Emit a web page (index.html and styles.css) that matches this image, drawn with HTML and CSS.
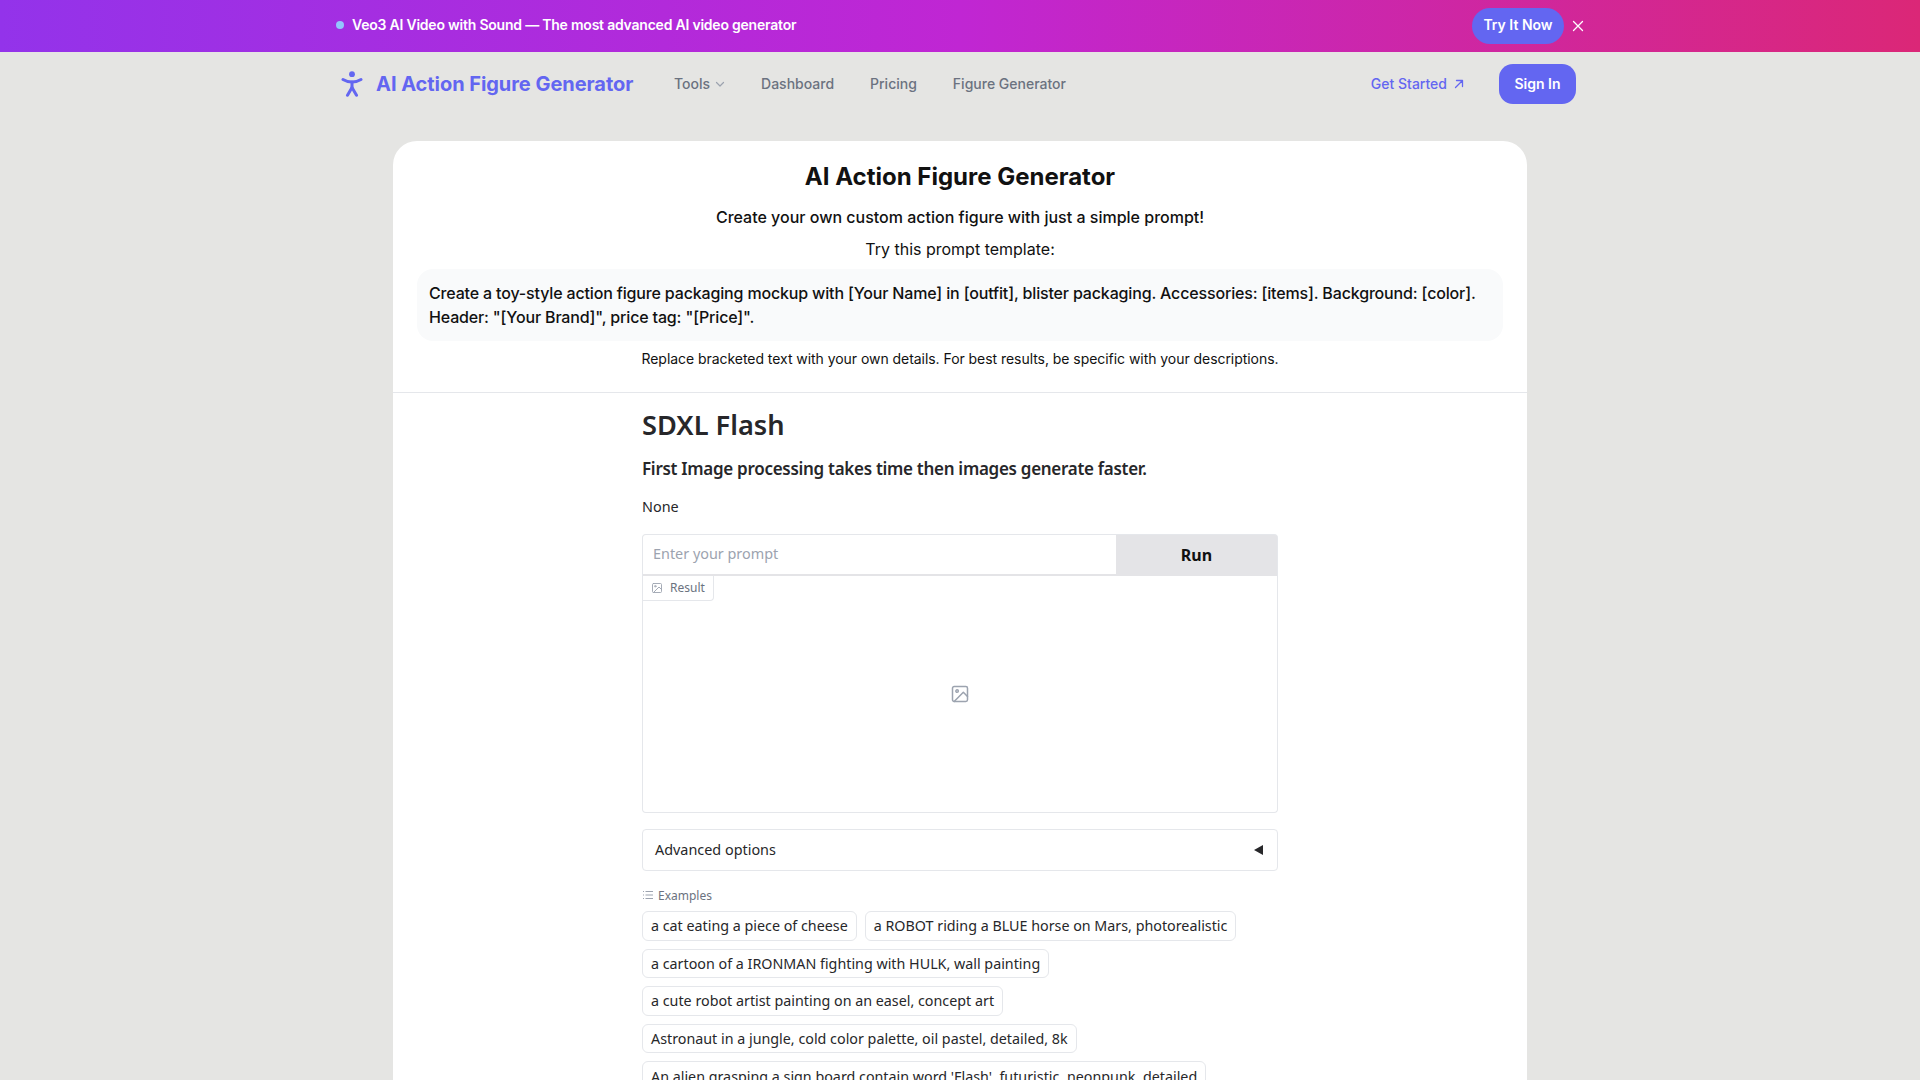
FILE: index.html
```html
<!DOCTYPE html>
<html lang="en">
<head>
<meta charset="utf-8">
<title>AI Action Figure Generator</title>
<link rel="stylesheet" href="styles.css">
</head>
<body>
<div class="banner">
  <div class="banner-inner">
    <div class="banner-msg"><span class="dot"></span><span class="banner-text">Veo3 AI Video with Sound — The most advanced AI video generator</span></div>
    <div class="banner-actions">
      <a class="try-btn">Try It Now</a>
      <svg class="close-icon" viewBox="0 0 24 24" fill="none" stroke="#fff" stroke-width="2.600" stroke-linecap="round"><path d="M3 3l18 18M21 3L3 21"/></svg>
    </div>
  </div>
</div>
<nav class="nav">
  <div class="nav-inner">
    <a class="brand">
      <svg class="brand-icon" viewBox="0 0 22 26" fill="none" stroke="#6366f1" stroke-width="3" stroke-linecap="round" stroke-linejoin="round"><circle cx="11" cy="3.200" r="2.900" fill="#6366f1" stroke="none"/><path d="M2 8.500c2.800 1.700 5.700 2.500 9 2.500s6.200-.8 9-2.500"/><path d="M11 11v5.500"/><path d="M6.500 24.300L11 16.500l4.500 7.800"/></svg>
      <span class="brand-name">AI Action Figure Generator</span>
    </a>
    <div class="nav-links">
      <a class="nav-link tools">Tools <svg class="chev" viewBox="0 0 12 12" fill="none" stroke="#9ca3af" stroke-width="1.200" stroke-linecap="round" stroke-linejoin="round"><path d="M2.500 4.500L6 8l3.500-3.500"/></svg></a>
      <a class="nav-link">Dashboard</a>
      <a class="nav-link">Pricing</a>
      <a class="nav-link">Figure Generator</a>
    </div>
    <div class="nav-right">
      <a class="started">Get Started <svg class="ext" viewBox="0 0 12 12" fill="none" stroke="#6366f1" stroke-width="1.300" stroke-linecap="round" stroke-linejoin="round"><path d="M2.500 9.500l7-7M3.500 2.500h6v6"/></svg></a>
      <a class="signin">Sign In</a>
    </div>
  </div>
</nav>
<main class="main">
  <section class="card">
    <header class="card-head">
      <h1 class="title">AI Action Figure Generator</h1>
      <p class="sub">Create your own custom action figure with just a simple prompt!</p>
      <p class="try">Try this prompt template:</p>
      <div class="template">Create a toy-style action figure packaging mockup with [Your Name] in [outfit], blister packaging. Accessories: [items]. Background: [color]. Header: "[Your Brand]", price tag: "[Price]".</div>
      <p class="hint">Replace bracketed text with your own details. For best results, be specific with your descriptions.</p>
    </header>
    <div class="app">
      <h2 class="app-title">SDXL Flash</h2>
      <h3 class="app-sub">First Image processing takes time then images generate faster.</h3>
      <p class="none">None</p>
      <div class="prompt-row">
        <div class="prompt-input">Enter your prompt</div>
        <button class="run">Run</button>
      </div>
      <div class="result">
        <div class="result-tab">
          <svg class="tab-icon" viewBox="0 0 24 24" fill="none" stroke="#9ca3af" stroke-width="1.800" stroke-linecap="round" stroke-linejoin="round"><rect x="3" y="3" width="18" height="18" rx="2"/><circle cx="8.500" cy="8.500" r="1.500"/><path d="M21 15l-5-5L5 21"/></svg>
          <span>Result</span>
        </div>
        <svg class="empty-icon" viewBox="0 0 24 24" fill="none" stroke="#9ca3af" stroke-width="1.800" stroke-linecap="round" stroke-linejoin="round"><rect x="3" y="3" width="18" height="18" rx="2"/><circle cx="8.500" cy="8.500" r="1.500"/><path d="M21 15l-5-5L5 21"/></svg>
      </div>
      <div class="advanced"><span class="advanced-label">Advanced options</span><span class="caret"></span></div>
      <div class="examples-label">
        <svg class="list-icon" viewBox="0 0 12 12" fill="none" stroke="#9ca3af" stroke-width="1"><path d="M3.500 2.500H11M3.500 6H11M3.500 9.500H11M1 2.500h1M1 6h1M1 9.500h1"/></svg>
        <span>Examples</span>
      </div>
      <div class="chips">
        <span class="chip">a cat eating a piece of cheese</span>
        <span class="chip">a ROBOT riding a BLUE horse on Mars, photorealistic</span>
        <span class="chip">a cartoon of a IRONMAN fighting with HULK, wall painting</span>
        <span class="chip">a cute robot artist painting on an easel, concept art</span>
        <span class="chip">Astronaut in a jungle, cold color palette, oil pastel, detailed, 8k</span>
        <span class="chip">An alien grasping a sign board contain word 'Flash', futuristic, neonpunk, detailed</span>
      </div>
    </div>
  </section>
</main>
</body>
</html>
```
FILE: styles.css
```css
* { box-sizing: border-box; }
html, body { margin: 0; height: 100%; overflow: hidden; }
body { background: #e5e5e3; font-family: Inter, "Liberation Sans", sans-serif; color: #111; }
h1, h2, h3, p { margin: 0; }

.banner { height: 52px; background: linear-gradient(90deg, #9333ea, #c026d3 50%, #db2777); }
.banner-inner { max-width: 1280px; height: 100%; margin: 0 auto; padding: 0 16px; display: flex; align-items: center; justify-content: space-between; }
.banner-msg { display: flex; align-items: center; gap: 8px; color: #fff; font-size: 14px; font-weight: 600; }
.banner-text { padding-bottom: 4px; letter-spacing: -0.22px; }
.dot { width: 8px; height: 8px; border-radius: 50%; background: #93c5fd; margin-bottom: 2px; }
.banner-actions { display: flex; align-items: center; gap: 8px; }
.try-btn { height: 36px; width: 92px; padding-bottom: 3px; border-radius: 18px; background: #6366f1; color: #fff; font-size: 14px; font-weight: 600; display: flex; align-items: center; justify-content: center; }
.close-icon { width: 12px; height: 12px; margin-bottom: 1px; }

.nav-inner { max-width: 1280px; height: 64px; margin: 0 auto; padding: 0 24px 0 20px; display: flex; align-items: center; }
.brand { display: flex; align-items: center; gap: 13px; width: 334px; }
.brand-icon { width: 22px; height: 26px; margin-left: 1px; }
.brand-name { color: #6366f1; font-size: 20px; font-weight: 700; letter-spacing: -0.05px; padding-bottom: 1px; }
.nav-links { display: flex; align-items: center; gap: 36px; font-size: 14px; font-weight: 500; color: #6b7280; padding-bottom: 2px; }
.nav-link { display: flex; align-items: center; gap: 4px; }
.tools { margin-right: -1px; }
.chev { width: 12px; height: 12px; margin-top: 2px; }
.nav-right { margin-left: auto; display: flex; align-items: center; gap: 34px; }
.started { display: flex; align-items: center; gap: 6px; padding-bottom: 2px; color: #6366f1; font-size: 14px; font-weight: 500; }
.ext { width: 12px; height: 12px; margin-top: 2px; }
.signin { width: 77px; height: 40px; padding-bottom: 2px; border-radius: 14px; background: #6366f1; color: #fff; font-size: 14px; font-weight: 600; display: flex; align-items: center; justify-content: center; }

.main { padding-top: 25px; }
.card { width: 1134px; margin: 0 auto; background: #fff; border-radius: 24px 24px 0 0; min-height: 1200px; }
.card-head { padding: 20px 24px 23px; border-bottom: 1px solid #e5e7eb; text-align: center; }
.title { font-size: 24px; line-height: 32px; font-weight: 700; }
.sub { margin-top: 12px; font-size: 16px; line-height: 24px; font-weight: 500; }
.try { margin-top: 8px; font-size: 16px; line-height: 24px; }
.template { margin-top: 8px; padding: 12px; background: #f9fafb; border-radius: 16px; text-align: left; font-size: 16px; line-height: 24px; font-weight: 500; letter-spacing: -0.16px; }
.hint { margin-top: 8px; font-size: 14px; line-height: 20px; letter-spacing: -0.05px; }

.app { width: 636px; margin: 0 auto; font-family: "Noto Sans", "Open Sans", sans-serif; color: #27272a; }
.app-title { padding-top: 14px; font-size: 27.200px; line-height: 36px; font-weight: 600; }
.app-sub { margin-top: 14px; font-size: 17px; line-height: 24px; font-weight: 600; letter-spacing: -0.29px; }
.none { margin-top: 16px; font-size: 14.400px; line-height: 20px; }
.prompt-row { margin-top: 17px; height: 42px; display: flex; background: #e4e4e7; border: 1px solid #e5e7eb; border-bottom: 0; border-radius: 4px 4px 0 0; overflow: hidden; }
.prompt-input { flex: 1; height: 39px; padding: 0 10px; background: #fff; color: #9ca3af; font-size: 14.400px; line-height: 38px; }
.run { width: 161px; padding: 0 0 2px; border: 0; background: #e4e4e7; color: #111; font: 700 16px "Noto Sans", sans-serif; }
.result { position: relative; height: 237px; border: 1px solid #e5e7eb; border-top: 0; border-radius: 0 0 4px 4px; display: flex; align-items: center; justify-content: center; }
.result-tab { position: absolute; left: 0; top: 0; height: 25px; width: 71px; padding: 0 0 1px 8px; display: flex; align-items: center; gap: 7px; border-right: 1px solid #e5e7eb; border-bottom: 1px solid #e5e7eb; border-radius: 0 0 4px 0; font-size: 12px; color: #6b7280; }
.tab-icon { width: 12px; height: 12px; }
.empty-icon { width: 20px; height: 20px; }
.advanced { margin-top: 16px; height: 42px; padding: 0 12px; display: flex; align-items: center; justify-content: space-between; border: 1px solid #e5e7eb; border-radius: 4px; font-size: 14.400px; }
.advanced-label { padding-bottom: 2px; }
.caret { width: 0; height: 0; border-style: solid; border-width: 5px 9px 5px 0; border-color: transparent #27272a transparent transparent; margin-right: 2px; }
.examples-label { margin-top: 16px; height: 16px; display: flex; align-items: center; gap: 4px; font-size: 12px; color: #6b7280; }
.list-icon { width: 12px; height: 12px; }
.chips { margin-top: 8px; display: flex; flex-wrap: wrap; gap: 8px; }
.chip { height: 29.600px; padding: 0 8px; display: flex; align-items: center; border: 1px solid #e5e7eb; border-radius: 6px; font-size: 14.300px; color: #27272a; }
```
